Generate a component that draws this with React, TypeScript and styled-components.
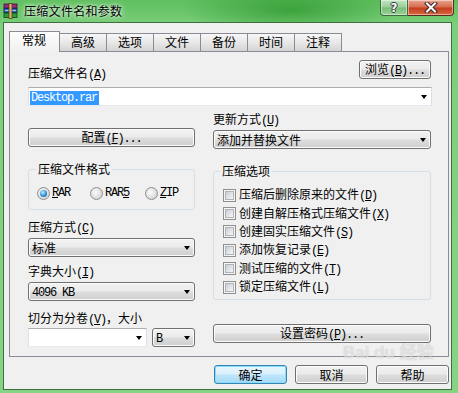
import React from "react";
import styled, { createGlobalStyle } from "styled-components";

const GlobalStyle = createGlobalStyle`
  html, body {
    margin: 0;
    padding: 0;
  }
  body {
    width: 458px;
    height: 393px;
    overflow: hidden;
    font-family: "Noto Sans CJK SC", "Noto Sans", sans-serif;
    font-size: 12px;
    line-height: 14px;
    color: #000;
  }
`;

const Window = styled.div`
  position: relative;
  width: 458px;
  height: 393px;
  display: flex;
  flex-direction: column;
  background:
    radial-gradient(ellipse 110px 26px at 290px 10px, rgba(30, 140, 30, 0.6), rgba(30, 140, 30, 0)),
    linear-gradient(to bottom, #5fbf5f 0, #7ccf7c 26px, #84d484 100%);
`;

const TitleBar = styled.div`
  height: 22px;
  display: flex;
  align-items: flex-start;
  padding-left: 3px;
`;

const AppIcon = styled.svg`
  flex: none;
  margin-top: 3px;
`;

const Title = styled.div`
  margin-left: 5px;
  line-height: 21px;
  letter-spacing: 0.3px;
  text-shadow: 0 0 3px #fff, 0 0 7px rgba(255, 255, 255, 0.85);
`;

const CaptionButtons = styled.div`
  display: flex;
  margin-left: auto;
  margin-right: 4px;
`;

const CaptionButton = styled.div<{ $close?: boolean }>`
  box-sizing: border-box;
  width: ${(p) => (p.$close ? 46 : 28)}px;
  height: 16px;
  display: flex;
  align-items: center;
  justify-content: center;
  border: 1px solid ${(p) => (p.$close ? "#5a2a1e" : "#3f6a3f")};
  border-top: none;
  border-left-width: ${(p) => (p.$close ? 0 : 1)}px;
  border-radius: ${(p) => (p.$close ? "0 0 4px 0" : "0 0 0 4px")};
  background: ${(p) =>
    p.$close
      ? "linear-gradient(#e9a48e, #d66a4c 48%, #c23c1e 52%, #d8683e)"
      : "linear-gradient(#c2e4c2, #98cf98 48%, #78bb78 52%, #98d298)"};
  box-shadow: inset 0 0 0 1px rgba(255, 255, 255, 0.45);
`;

const HelpGlyph = styled.span`
  font-family: "DejaVu Sans", sans-serif;
  font-weight: bold;
  font-size: 12px;
  line-height: 14px;
  color: #fff;
  text-shadow: 1px 0 0 #333, -1px 0 0 #333, 0 1px 0 #333, 0 -1px 0 #333;
`;

const Client = styled.div`
  flex: 1;
  margin: 0 6px 3px 3px;
  border: 1px solid #3f6f3f;
  background: #f0f0f0;
  padding: 8px 0 0 5px;
  display: flex;
  flex-direction: column;
`;

const TabStrip = styled.div`
  height: 20px;
  display: flex;
  align-items: flex-end;
  position: relative;
  z-index: 1;
`;

const Tab = styled.div<{ $active?: boolean }>`
  box-sizing: border-box;
  height: ${(p) => (p.$active ? 21 : 18)}px;
  margin-bottom: ${(p) => (p.$active ? -1 : 0)}px;
  margin-left: ${(p) => (p.$active ? 0 : -1)}px;
  padding: ${(p) => (p.$active ? "1px 13px 0 12px" : "1px 11px 0 11px")};
  border: 1px solid #898c95;
  border-bottom: none;
  background: ${(p) =>
    p.$active ? "linear-gradient(#fdfdfd, #f0f0f0)" : "linear-gradient(#f7f7f7, #e6e6e6 55%, #d3d3d3)"};
  z-index: ${(p) => (p.$active ? 2 : 0)};
  &:first-child {
    margin-left: 0;
  }
`;

const Panel = styled.div`
  box-sizing: border-box;
  width: 440px;
  height: 306px;
  border: 1px solid #898c95;
  background: #f0f0f0;
  padding: 8px 16px 0 18px;
`;

const TopRow = styled.div`
  display: flex;
  justify-content: space-between;
  align-items: flex-start;
`;

const Label = styled.div<{ $top?: number }>`
  margin-top: ${(p) => p.$top ?? 0}px;
  white-space: nowrap;
`;

const Acc = styled.span`
  font-family: "Liberation Mono", monospace;
  letter-spacing: -1.2px;
  u {
    text-underline-offset: 1px;
  }
`;

const Button = styled.button<{ $default?: boolean; $width?: number; $top?: number }>`
  box-sizing: border-box;
  flex: none;
  width: ${(p) => (p.$width ? `${p.$width}px` : "100%")};
  height: 19px;
  margin: ${(p) => p.$top ?? 0}px 0 0 0;
  padding: 0;
  font: inherit;
  line-height: 14px;
  color: #000;
  border: 1px solid ${(p) => (p.$default ? "#3c7fb1" : "#707070")};
  border-radius: 3px;
  background: ${(p) =>
    p.$default
      ? "linear-gradient(#eaf6fd, #d9f0fc 48%, #bee6fd 52%, #a7d9f5)"
      : "linear-gradient(#f2f2f2, #ebebeb 48%, #dddddd 52%, #cfcfcf)"};
  box-shadow: inset 0 0 0 1px ${(p) => (p.$default ? "#7ee0fb" : "#fcfcfc")};
`;

const Select = styled.div<{ $editable?: boolean; $top?: number; $width?: number }>`
  box-sizing: border-box;
  width: ${(p) => (p.$width ? `${p.$width}px` : "100%")};
  height: 19px;
  margin-top: ${(p) => p.$top ?? 0}px;
  display: flex;
  align-items: center;
  padding: 0 4px 0 ${(p) => (p.$editable ? 1 : 3)}px;
  border: 1px solid;
  border-color: ${(p) => (p.$editable ? "#abadb3 #dbdfe6 #e3e9ef #e2e3ea" : "#707070")};
  border-radius: ${(p) => (p.$editable ? 0 : 3)}px;
  background: ${(p) =>
    p.$editable ? "#fff" : "linear-gradient(#f2f2f2, #ebebeb 48%, #dddddd 52%, #cfcfcf)"};
  box-shadow: ${(p) => (p.$editable ? "none" : "inset 0 0 0 1px #fcfcfc")};
`;

const SelectText = styled.span`
  flex: 1;
  white-space: nowrap;
  line-height: 15px;
`;

const Selected = styled.span`
  font-family: "Liberation Mono", monospace;
  letter-spacing: -1.2px;
  padding: 0 2px 0 1px;
  background: #3399ff;
  color: #fff;
`;

const Arrow = styled.span`
  flex: none;
  width: 0;
  height: 0;
  border-left: 3.5px solid transparent;
  border-right: 3.5px solid transparent;
  border-top: 4px solid #000;
`;

const Columns = styled.div`
  display: grid;
  grid-template-columns: 167px 218px;
  column-gap: 18px;
`;

const Column = styled.div`
  display: flex;
  flex-direction: column;
`;

const Group = styled.fieldset<{ $top?: number; $pad: string }>`
  margin: ${(p) => p.$top ?? 0}px 0 0 0;
  padding: ${(p) => p.$pad};
  border: 1px solid #d5dfe5;
  border-radius: 3px;
  min-width: 0;
`;

const Legend = styled.legend<{ $shift?: number }>`
  padding: 0 2px;
  margin-left: ${(p) => p.$shift ?? 0}px;
  line-height: 14px;
`;

const RadioRow = styled.div`
  display: flex;
  align-items: center;
  height: 14px;
`;

const RadioOption = styled.label<{ $width?: number }>`
  display: flex;
  align-items: center;
  gap: 2px;
  width: ${(p) => (p.$width ? `${p.$width}px` : "auto")};
`;

const Radio = styled.span<{ $checked?: boolean }>`
  box-sizing: border-box;
  width: 13px;
  height: 13px;
  border-radius: 50%;
  border: 1px solid #8f8f8f;
  background: radial-gradient(circle at 40% 40%, #fbfbfb, #d3d3d3 80%);
  display: flex;
  align-items: center;
  justify-content: center;
  &::after {
    content: "";
    display: ${(p) => (p.$checked ? "block" : "none")};
    width: 7px;
    height: 7px;
    border-radius: 50%;
    background: radial-gradient(circle at 40% 35%, #c4f0ff, #2d90d6 55%, #0f4c8c);
  }
`;

const CheckRow = styled.label`
  display: flex;
  align-items: center;
  gap: 3px;
  height: 18.4px;
  white-space: nowrap;
`;

const CheckBox = styled.span`
  box-sizing: border-box;
  flex: none;
  width: 13px;
  height: 13px;
  border: 1px solid #8e8f8f;
  background: #f6f6f6;
  padding: 1px;
  &::after {
    content: "";
    display: block;
    box-sizing: border-box;
    width: 9px;
    height: 9px;
    border: 1px solid #aeb3b9;
    background: linear-gradient(135deg, #cbcfd5, #f6f6f6);
  }
`;

const SplitRow = styled.div`
  display: flex;
  gap: 5px;
  margin-top: 1px;
`;

const Footer = styled.div`
  width: 440px;
  display: flex;
  justify-content: flex-end;
  gap: 8px;
  margin-top: 8px;
`;

// faint site watermark lying over the dialog, as in the screenshot
const Watermark = styled.div`
  position: absolute;
  left: 343px;
  top: 344px;
  pointer-events: none;
  font-family: "Liberation Sans", "Noto Sans CJK SC", sans-serif;
  font-size: 17px;
  font-weight: bold;
  line-height: 18px;
  color: rgba(255, 255, 255, 0.55);
  text-shadow: 0 0 1px rgba(90, 90, 90, 0.35);
`;

const options = [
  { text: "压缩后删除原来的文件", key: "D" },
  { text: "创建自解压格式压缩文件", key: "X" },
  { text: "创建固实压缩文件", key: "S" },
  { text: "添加恢复记录", key: "E" },
  { text: "测试压缩的文件", key: "T" },
  { text: "锁定压缩文件", key: "L" },
];

const tabs = ["常规", "高级", "选项", "文件", "备份", "时间", "注释"];

function Key({ k, dots }: { k: string; dots?: boolean }) {
  return (
    <Acc>
      (<u>{k}</u>){dots ? "..." : ""}
    </Acc>
  );
}

export default function App() {
  return (
    <Window>
      <GlobalStyle />
      <TitleBar>
        <AppIcon width="16" height="16" viewBox="0 0 16 16">
          <rect x="1" y="1" width="13" height="4" fill="#9a2a86" stroke="#3a0f34" strokeWidth="0.8" />
          <rect x="1" y="5.5" width="13" height="4" fill="#2e62c4" stroke="#0f2250" strokeWidth="0.8" />
          <rect x="1" y="10" width="13" height="4.5" fill="#2f9c3c" stroke="#0f4514" strokeWidth="0.8" />
          <line x1="2" y1="7.5" x2="13" y2="7.5" stroke="#e8eef8" strokeWidth="0.7" />
          <rect x="6" y="0.5" width="3" height="15" fill="#d8b56e" stroke="#5a3e10" strokeWidth="0.8" />
        </AppIcon>
        <Title>压缩文件名和参数</Title>
        <CaptionButtons>
          <CaptionButton>
            <HelpGlyph>?</HelpGlyph>
          </CaptionButton>
          <CaptionButton $close>
            <svg width="14" height="11" viewBox="0 0 14 11">
              <path d="M3 1.5 L11 9.5 M11 1.5 L3 9.5" stroke="#3a2a2a" strokeWidth="4" strokeLinecap="square" />
              <path d="M3 1.5 L11 9.5 M11 1.5 L3 9.5" stroke="#fff" strokeWidth="2" strokeLinecap="square" />
            </svg>
          </CaptionButton>
        </CaptionButtons>
      </TitleBar>

      <Client>
        <TabStrip>
          {tabs.map((t, i) => (
            <Tab key={t} $active={i === 0}>
              {t}
            </Tab>
          ))}
        </TabStrip>

        <Panel>
          <TopRow>
            <Label $top={6}>
              压缩文件名<Key k="A" />
            </Label>
            <Button $width={72} style={{ marginRight: 1 }}>
              浏览<Key k="B" dots />
            </Button>
          </TopRow>
          <Select $editable $top={5}>
            <SelectText>
              <Selected>Desktop.rar</Selected>
            </SelectText>
            <Arrow />
          </Select>

          <Columns>
            <Column>
              <Button $top={22}>
                配置<Key k="F" dots />
              </Button>
              <Group $top={15} $pad="10px 0 9px 8px">
                <Legend $shift={-1}>压缩文件格式</Legend>
                <RadioRow>
                  <RadioOption $width={53}>
                    <Radio $checked />
                    <Acc>
                      <u>R</u>AR
                    </Acc>
                  </RadioOption>
                  <RadioOption $width={55}>
                    <Radio />
                    <Acc>
                      RAR<u>5</u>
                    </Acc>
                  </RadioOption>
                  <RadioOption>
                    <Radio />
                    <Acc>
                      <u>Z</u>IP
                    </Acc>
                  </RadioOption>
                </RadioRow>
              </Group>
              <Label $top={10}>
                压缩方式<Key k="C" />
              </Label>
              <Select $top={2}>
                <SelectText>标准</SelectText>
                <Arrow />
              </Select>
              <Label $top={7}>
                字典大小<Key k="I" />
              </Label>
              <Select $top={2}>
                <SelectText>
                  <Acc>4096 KB</Acc>
                </SelectText>
                <Arrow />
              </Select>
              <Label $top={10}>
                切分为分卷<Key k="V" />，大小
              </Label>
              <SplitRow>
                <Select $editable $width={119}>
                  <SelectText />
                  <Arrow />
                </Select>
                <Select $width={43}>
                  <SelectText>
                    <Acc>B</Acc>
                  </SelectText>
                  <Arrow />
                </Select>
              </SplitRow>
            </Column>

            <Column>
              <Label $top={6}>
                更新方式<Key k="U" />
              </Label>
              <Select $top={2}>
                <SelectText>添加并替换文件</SelectText>
                <Arrow />
              </Select>
              <Group $top={15} $pad="8px 0 3px 9px">
                <Legend $shift={-3}>压缩选项</Legend>
                {options.map((o) => (
                  <CheckRow key={o.key}>
                    <CheckBox />
                    <span>
                      {o.text}
                      <Key k={o.key} />
                    </span>
                  </CheckRow>
                ))}
              </Group>
              <Button $top={24}>
                设置密码<Key k="P" dots />
              </Button>
            </Column>
          </Columns>
        </Panel>

        <Footer>
          <Button $default $width={73}>
            确定
          </Button>
          <Button $width={73}>取消</Button>
          <Button $width={73}>帮助</Button>
        </Footer>
      </Client>

      <Watermark>Bai du 经验</Watermark>
    </Window>
  );
}
